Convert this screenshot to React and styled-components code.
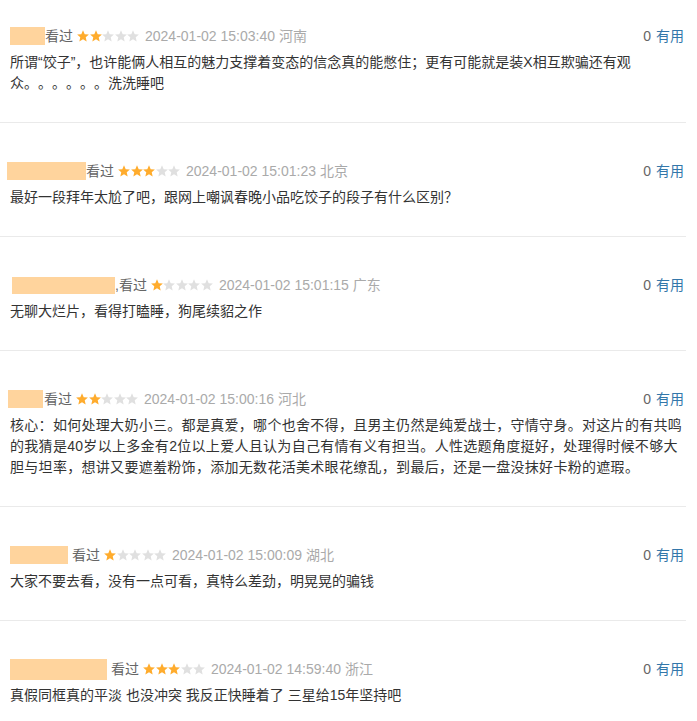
import React from "react";
import styled, { createGlobalStyle } from "styled-components";

const comments = [
  {
    nameWidth: 35,
    nameHeight: 18,
    gap: 0,
    rating: 2,
    time: "2024-01-02 15:03:40",
    place: "河南",
    text: "所谓“饺子”，也许能俩人相互的魅力支撑着变态的信念真的能憋住；更有可能就是装X相互欺骗还有观众。。。。。。洗洗睡吧",
  },
  {
    nameWidth: 79,
    nameHeight: 18,
    gap: 0,
    offset: -3,
    rating: 3,
    time: "2024-01-02 15:01:23",
    place: "北京",
    text: "最好一段拜年太尬了吧，跟网上嘲讽春晚小品吃饺子的段子有什么区别？",
  },
  {
    nameWidth: 103,
    nameHeight: 17,
    gap: 0,
    offset: 2,
    comma: true,
    rating: 1,
    time: "2024-01-02 15:01:15",
    place: "广东",
    text: "无聊大烂片，看得打瞌睡，狗尾续貂之作",
  },
  {
    nameWidth: 35,
    nameHeight: 18,
    gap: 1,
    offset: -2,
    rating: 2,
    tracking: 0.3,
    time: "2024-01-02 15:00:16",
    place: "河北",
    text: "核心：如何处理大奶小三。都是真爱，哪个也舍不得，且男主仍然是纯爱战士，守情守身。对这片的有共鸣的我猜是40岁以上多金有2位以上爱人且认为自己有情有义有担当。人性选题角度挺好，处理得时候不够大胆与坦率，想讲又要遮羞粉饰，添加无数花活美术眼花缭乱，到最后，还是一盘没抹好卡粉的遮瑕。",
  },
  {
    nameWidth: 58,
    nameHeight: 18,
    gap: 4,
    rating: 1,
    time: "2024-01-02 15:00:09",
    place: "湖北",
    text: "大家不要去看，没有一点可看，真特么差劲，明晃晃的骗钱",
  },
  {
    nameWidth: 97,
    nameHeight: 21,
    gap: 4,
    rating: 3,
    time: "2024-01-02 14:59:40",
    place: "浙江",
    text: "真假同框真的平淡 也没冲突 我反正快睡着了 三星给15年坚持吧",
  },
];

const GlobalStyle = createGlobalStyle`
  body {
    margin: 0;
    background: #fff;
    font-family: "Liberation Sans", "Noto Sans CJK SC", sans-serif;
    text-spacing-trim: space-all;
  }
`;

const List = styled.div`
  width: 686px;
`;

const Item = styled.div`
  padding: 26px 2px 28px 10px;
  margin-bottom: 12px;
  border-bottom: 1px solid #eaeaea;
`;

const Header = styled.div`
  display: flex;
  align-items: center;
  height: 20px;
  font-size: 14px;
  line-height: 20px;
`;

const Name = styled.span`
  display: inline-block;
  width: ${({ $w }) => $w}px;
  height: ${({ $h }) => $h}px;
  margin-left: ${({ $offset }) => $offset || 0}px;
  margin-right: ${({ $gap }) => $gap}px;
  background: #ffd49d;
`;

const Watched = styled.span`
  color: #666;
`;

const Stars = styled.span`
  display: inline-flex;
  gap: 0.5px;
  margin: 0 6px 0 4px;
`;

const Time = styled.span`
  color: #aaa;
`;

const Votes = styled.span`
  margin-left: auto;
  color: #666;
`;

const Useful = styled.span`
  margin-left: 5px;
  color: #37a;
`;

const Body = styled.p`
  margin: 6px 0 0;
  font-size: 14px;
  line-height: 21px;
  color: #333;
  letter-spacing: ${({ $tracking }) => $tracking || 0}px;
  text-spacing-trim: space-all;
`;

const Star = ({ on }) => (
  <svg width="12" height="12" viewBox="1 1.5 22 21">
    <path
      d="M12 1.5l3.1 7.1 7.7.7-5.8 5.1 1.7 7.6L12 18l-6.7 4 1.7-7.6-5.8-5.1 7.7-.7z"
      fill={on ? "#ffac2d" : "#e0e0e0"}
    />
  </svg>
);

const App = () => (
  <>
    <GlobalStyle />
    <List>
      {comments.map((c, i) => (
        <Item key={i}>
          <Header>
            <Name $w={c.nameWidth} $h={c.nameHeight} $gap={c.gap} $offset={c.offset} />
            <Watched>{c.comma ? ",看过" : "看过"}</Watched>
            <Stars>
              {[1, 2, 3, 4, 5].map((n) => (
                <Star key={n} on={n <= c.rating} />
              ))}
            </Stars>
            <Time>
              {c.time} {c.place}
            </Time>
            <Votes>
              0<Useful>有用</Useful>
            </Votes>
          </Header>
          <Body $tracking={c.tracking}>{c.text}</Body>
        </Item>
      ))}
    </List>
  </>
);

export default App;
